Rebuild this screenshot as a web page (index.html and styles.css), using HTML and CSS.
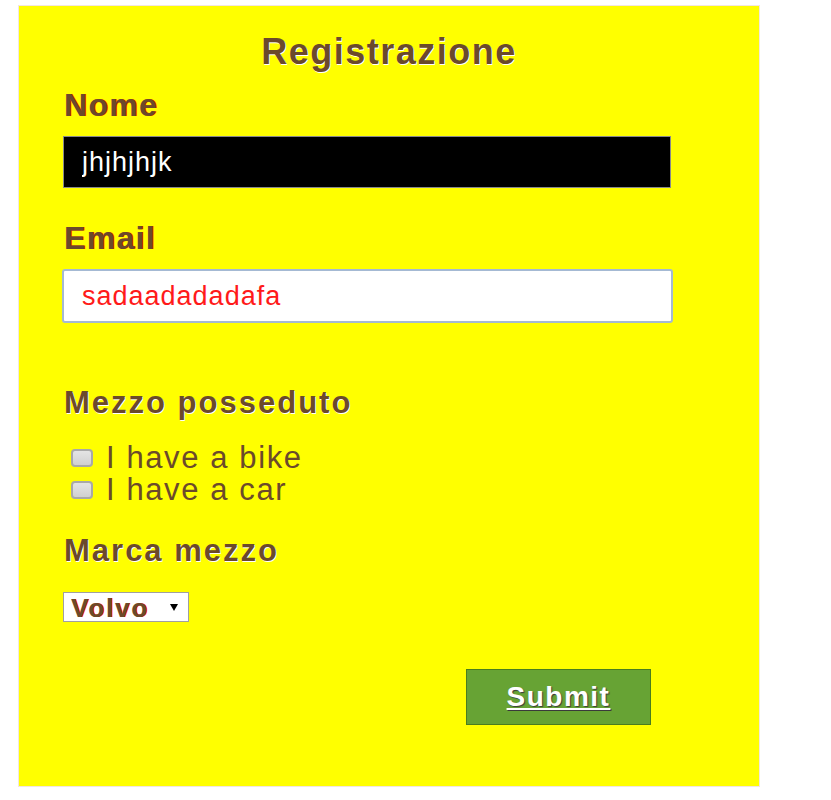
FILE: index.html
```html
<!DOCTYPE html>
<html lang="it">
<head>
<meta charset="utf-8">
<title>Registrazione</title>
<link rel="stylesheet" href="styles.css">
</head>
<body>
<form class="card">
  <h2 class="title">Registrazione</h2>
  <label class="label label-red" for="nome">Nome</label>
  <input class="field field-dark" id="nome" type="text" value="jhjhjhjk">
  <label class="label label-red label-email" for="email">Email</label>
  <input class="field field-light" id="email" type="text" value="sadaadadadafa">
  <div class="label label-white label-mezzo">Mezzo posseduto</div>
  <div class="checks">
    <label class="check"><input type="checkbox" class="box"> I have a bike</label>
    <label class="check"><input type="checkbox" class="box"> I have a car</label>
  </div>
  <div class="label label-white label-marca">Marca mezzo</div>
  <div class="select-wrap">
    <select class="select">
      <option>Volvo</option>
      <option>Saab</option>
      <option>Fiat</option>
    </select>
  </div>
  <div class="actions">
    <button type="button" class="submit">Submit</button>
  </div>
</form>
</body>
</html>
```

FILE: styles.css
```css
html, body {
  margin: 0;
  padding: 0;
  background: #ffffff;
}

body {
  font-family: "Liberation Sans", Arial, sans-serif;
}

.card {
  box-sizing: border-box;
  margin: 5px 0 0 18px;
  width: 742px;
  height: 782px;
  background: #ffff00;
  border: 1px solid #f3e6e0;
  padding: 26px 0 0 44px;
  display: flex;
  flex-direction: column;
  align-items: flex-start;
}

.title {
  align-self: stretch;
  margin: 0 44px 0 0;
  text-align: center;
  font-size: 36px;
  line-height: 40px;
  letter-spacing: 1.5px;
  font-weight: bold;
  color: #6b4a2b;
  text-shadow: 1px 1px 0 #ffffff;
}

.label {
  display: block;
  margin: 15px 0 0 1px;
  font-size: 32px;
  line-height: 36px;
  letter-spacing: 1.3px;
  font-weight: bold;
  color: #6b4a2b;
}

.label-red {
  text-shadow: 1px 0 0 #ff2a00;
}

.label-white {
  font-size: 31px;
  letter-spacing: 2px;
  text-shadow: 1px 1px 0 #ffffff;
}

.label-email {
  margin-top: 32px;
}

.label-mezzo {
  margin-top: 62px;
}

.label-marca {
  margin-top: 27px;
}

.field {
  box-sizing: border-box;
  display: block;
  margin-top: 13px;
  font-family: "Liberation Sans", Arial, sans-serif;
  font-size: 27px;
  letter-spacing: 1px;
  padding: 0 18px;
  outline: none;
}

.field-dark {
  width: 608px;
  height: 52px;
  background: #000000;
  color: #ffffff;
  border: 1px solid #8a8a8a;
}

.field-light {
  width: 611px;
  height: 54px;
  margin-left: -1px;
  background: #ffffff;
  color: #ff1a1a;
  border: 2px solid #a4b9d3;
  border-radius: 3px;
}

.checks {
  margin: 21px 0 0 8px;
  display: flex;
  flex-direction: column;
}

.check {
  display: flex;
  align-items: center;
  gap: 13px;
  font-size: 31px;
  line-height: 32px;
  letter-spacing: 1.6px;
  color: #6b4a2b;
}

.box {
  appearance: none;
  -webkit-appearance: none;
  box-sizing: border-box;
  margin: 0;
  width: 22px;
  height: 18px;
  border: 2px solid #a8a8a8;
  border-radius: 4px;
  background: linear-gradient(#e4e4e4, #d0d0d0);
}

.select-wrap {
  position: relative;
  margin-top: 23px;
}

.select-wrap::after {
  content: "";
  position: absolute;
  left: 107px;
  top: 12px;
  border-left: 4px solid transparent;
  border-right: 4px solid transparent;
  border-top: 7px solid #000000;
  pointer-events: none;
}

.select {
  appearance: none;
  -webkit-appearance: none;
  box-sizing: border-box;
  width: 126px;
  height: 30px;
  margin: 0;
  padding: 0 0 0 7px;
  background: #ffffff;
  border: 1px solid #a0a0a0;
  border-radius: 0;
  font-family: "Liberation Sans", Arial, sans-serif;
  font-size: 26px;
  letter-spacing: 1.8px;
  font-weight: bold;
  color: #6b4a2b;
  text-shadow: 1px 0 0 #ff2a00;
}

.actions {
  margin: 47px 0 0 403px;
}

.submit {
  box-sizing: border-box;
  width: 185px;
  height: 56px;
  background: #67a334;
  border: 1px solid #4a7d1e;
  border-radius: 0;
  font-family: "Liberation Sans", Arial, sans-serif;
  font-size: 28px;
  letter-spacing: 1.5px;
  font-weight: bold;
  color: #ffffff;
  text-decoration: underline;
  text-shadow: 1px 1px 1px #3a3a3a;
  cursor: pointer;
}
```
